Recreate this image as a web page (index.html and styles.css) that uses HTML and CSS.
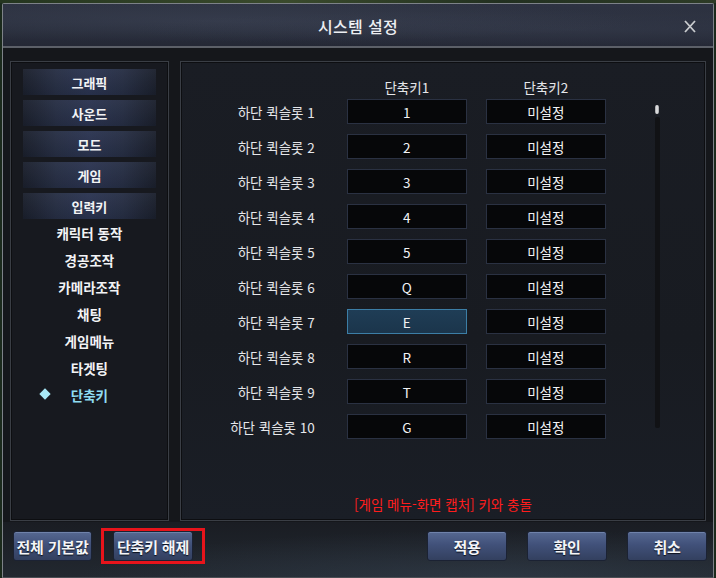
FILE: index.html
```html
<!DOCTYPE html>
<html lang="ko">
<head>
<meta charset="utf-8">
<title>시스템 설정</title>
<link rel="stylesheet" href="styles.css">
</head>
<body>
<div class="bgstrip"></div>
<div class="window">
  <svg class="corner corner-left" width="14" height="14" viewBox="0 0 14 14"><path d="M1.5 1.5h5v5h-5zM6.5 1.5h5v5h-5zM1.5 6.5h5v5h-5z" fill="none" stroke="#d8dadc" stroke-width="1.3"/></svg>
  <svg class="corner corner-right" width="14" height="14" viewBox="0 0 14 14"><path d="M1.5 1.5h5v5h-5zM6.5 1.5h5v5h-5zM6.5 6.5h5v5h-5z" fill="none" stroke="#d8dadc" stroke-width="1.3"/></svg>
  <header class="titlebar">
    <h1 class="title">시스템 설정</h1>
    <svg class="close" width="12" height="13" viewBox="0 0 12 13"><path d="M1 1l10 11M11 1L1 12" stroke="#c9cbce" stroke-width="1.8" fill="none"/></svg>
  </header>
  <div class="body">
    <nav class="side">
      <div class="cat">그래픽</div>
      <div class="cat">사운드</div>
      <div class="cat">모드</div>
      <div class="cat">게임</div>
      <div class="cat last">입력키</div>
      <div class="sub">캐릭터 동작</div>
      <div class="sub">경공조작</div>
      <div class="sub">카메라조작</div>
      <div class="sub">채팅</div>
      <div class="sub">게임메뉴</div>
      <div class="sub">타겟팅</div>
      <div class="sub active"><span class="diamond"></span>단축키</div>
    </nav>
    <main class="main">
      <div class="content">
        <div class="list">
          <div class="row head"><span class="label"></span><span class="col">단축키1</span><span class="col">단축키2</span></div>
          <div class="row"><span class="label">하단 퀵슬롯 1</span><span class="key">1</span><span class="key">미설정</span></div>
          <div class="row"><span class="label">하단 퀵슬롯 2</span><span class="key">2</span><span class="key">미설정</span></div>
          <div class="row"><span class="label">하단 퀵슬롯 3</span><span class="key">3</span><span class="key">미설정</span></div>
          <div class="row"><span class="label">하단 퀵슬롯 4</span><span class="key">4</span><span class="key">미설정</span></div>
          <div class="row"><span class="label">하단 퀵슬롯 5</span><span class="key">5</span><span class="key">미설정</span></div>
          <div class="row"><span class="label">하단 퀵슬롯 6</span><span class="key">Q</span><span class="key">미설정</span></div>
          <div class="row"><span class="label">하단 퀵슬롯 7</span><span class="key selected">E</span><span class="key">미설정</span></div>
          <div class="row"><span class="label">하단 퀵슬롯 8</span><span class="key">R</span><span class="key">미설정</span></div>
          <div class="row"><span class="label">하단 퀵슬롯 9</span><span class="key">T</span><span class="key">미설정</span></div>
          <div class="row"><span class="label">하단 퀵슬롯 10</span><span class="key">G</span><span class="key">미설정</span></div>
        </div>
        <div class="scroll"><div class="thumb"></div><div class="track"></div></div>
      </div>
      <p class="warning">[게임 메뉴-화면 캡처] 키와 충돌</p>
    </main>
  </div>
  <footer class="footer">
    <div class="left">
      <button class="btn">전체 기본값</button>
      <div class="highlight"><button class="btn">단축키 해제</button></div>
    </div>
    <div class="right">
      <button class="btn">적용</button>
      <button class="btn">확인</button>
      <button class="btn">취소</button>
    </div>
  </footer>
</div>
</body>
</html>
```
FILE: styles.css
```css
* { box-sizing: border-box; }
html, body {
  margin: 0;
  padding: 0;
  width: 716px;
  height: 578px;
  overflow: hidden;
  background: #1b2a1c;
  font-family: "Noto Sans CJK KR", "Noto Sans", sans-serif;
}
.bgstrip {
  height: 3px;
  background: linear-gradient(90deg, #24351f, #3a4a2c 40%, #223020 70%, #2d3b26);
}
.window {
  position: relative;
  margin: 0 2px 0 2px;
  height: 575px;
  border: 1px solid #7d8288;
  border-bottom-color: #4a4e54;
  border-radius: 2px 2px 0 0;
  background: #16181d;
  display: flex;
  flex-direction: column;
}
.corner { position: absolute; top: 3px; }
.corner-left { left: 0; }
.corner-right { right: 0; }
.titlebar {
  height: 44px;
  flex: none;
  display: flex;
  align-items: center;
  justify-content: center;
  position: relative;
  background:
    radial-gradient(ellipse at 30% 40%, rgba(72,80,100,0.35), transparent 60%),
    radial-gradient(ellipse at 80% 60%, rgba(62,68,86,0.35), transparent 55%),
    linear-gradient(180deg, #2e3342 0%, #292e3c 60%, #242835 100%);
  border-bottom: 2px solid #5c6068;
}
.title {
  margin: 0;
  font-size: 16px;
  font-weight: 500;
  color: #eceef2;
  letter-spacing: 0.3px;
  padding-top: 1px;
}
.close { position: absolute; right: 17px; top: 16px; }
.body {
  flex: none;
  height: 474px;
  display: flex;
  gap: 11px;
  padding: 13px 7px 0 7px;
  background: #15171b;
}
.side {
  width: 159px;
  height: 460px;
  border: 1px solid #3a3e45;
  box-shadow: inset 0 0 0 1px #0d0e11;
  background: #17191f;
  padding: 7px 12px 0 12px;
  display: flex;
  flex-direction: column;
}
.cat {
  height: 26px;
  margin-bottom: 5px;
  display: flex;
  align-items: center;
  justify-content: center;
  font-size: 13px;
  font-weight: 700;
  color: #f2f3f5;
  background:
    linear-gradient(180deg, rgba(255,255,255,0.04), rgba(0,0,0,0.08)),
    linear-gradient(90deg, #1a1f2c 0%, #262e44 25%, #2a3350 50%, #262e44 75%, #1a1f2c 100%);
}
.cat.last { margin-bottom: 0; }
.sub {
  height: 27px;
  display: flex;
  align-items: center;
  justify-content: center;
  font-size: 13.5px;
  font-weight: 700;
  color: #f2f3f5;
  position: relative;
}
.sub.active { color: #8fdcf2; }
.diamond {
  position: absolute;
  left: 18px;
  top: 9px;
  width: 8px;
  height: 8px;
  background: #a8e8f6;
  transform: rotate(45deg);
}
.main {
  width: 527px;
  height: 460px;
  border: 1px solid #3a3e45;
  box-shadow: inset 0 0 0 1px #0d0e11;
  background: linear-gradient(180deg, #1a1d24 0%, #181b21 60%, #1a1e26 100%);
  display: flex;
  flex-direction: column;
}
.content {
  display: flex;
  padding-top: 15px;
}
.list { display: flex; flex-direction: column; }
.row {
  display: flex;
  align-items: center;
  height: 25px;
  margin-bottom: 10px;
}
.row.head { height: 20px; margin-bottom: 2px; }
.label {
  width: 134px;
  margin-right: 32px;
  text-align: right;
  font-size: 13.5px;
  color: #e6e7ea;
}
.col {
  width: 120px;
  margin-right: 19px;
  text-align: center;
  font-size: 13.5px;
  color: #e6e7ea;
}
.key {
  width: 120px;
  height: 25px;
  margin-right: 19px;
  display: flex;
  align-items: center;
  justify-content: center;
  background: #060709;
  border: 1px solid #2a3142;
  font-size: 13.5px;
  color: #f2f3f5;
}
.key.selected {
  background: linear-gradient(180deg, #1f3d56, #1b354b);
  border-color: #3c7ea6;
}
.scroll {
  margin-left: 30px;
  margin-top: 28px;
  width: 5px;
  display: flex;
  flex-direction: column;
  align-items: center;
}
.thumb {
  width: 4px;
  height: 9px;
  border-radius: 2px;
  background: linear-gradient(90deg, #9a9ca0, #eeeeee, #9a9ca0);
}
.track {
  margin-top: 3px;
  width: 5px;
  height: 311px;
  border-radius: 2px;
  background: #111215;
}
.warning {
  margin: auto 0 7px 0;
  text-align: center;
  font-size: 13.5px;
  color: #ff1d1d;
  line-height: 18px;
}
.footer {
  flex: 1;
  display: flex;
  justify-content: space-between;
  align-items: flex-start;
  padding: 9px 6px 0 10px;
  background:
    radial-gradient(ellipse at 70% 100%, rgba(58,72,88,0.45), transparent 60%),
    linear-gradient(180deg, #1a1d23 0%, #222830 100%);
}
.left, .right { display: flex; align-items: flex-start; }
.left { gap: 9px; margin-top: -3px; }
.left > .btn { margin-top: 3px; }
.right { gap: 20px; }
.highlight {
  border: 3px solid #e8141b;
  padding: 0 9px;
}
.btn {
  width: 80px;
  height: 30px;
  padding: 0;
  border: 1px solid #1b2233;
  border-radius: 3px;
  background: linear-gradient(180deg, #566891 0%, #41517a 45%, #33405f 100%);
  box-shadow: inset 0 1px 0 rgba(160,180,220,0.35);
  color: #f4f5f8;
  font-family: "Noto Sans CJK KR", "Noto Sans", sans-serif;
  font-size: 15px;
  font-weight: 700;
  letter-spacing: -0.2px;
  text-shadow: 0 1px 1px #0b0f1a;
}
.left > .btn { width: 79px; }
```
